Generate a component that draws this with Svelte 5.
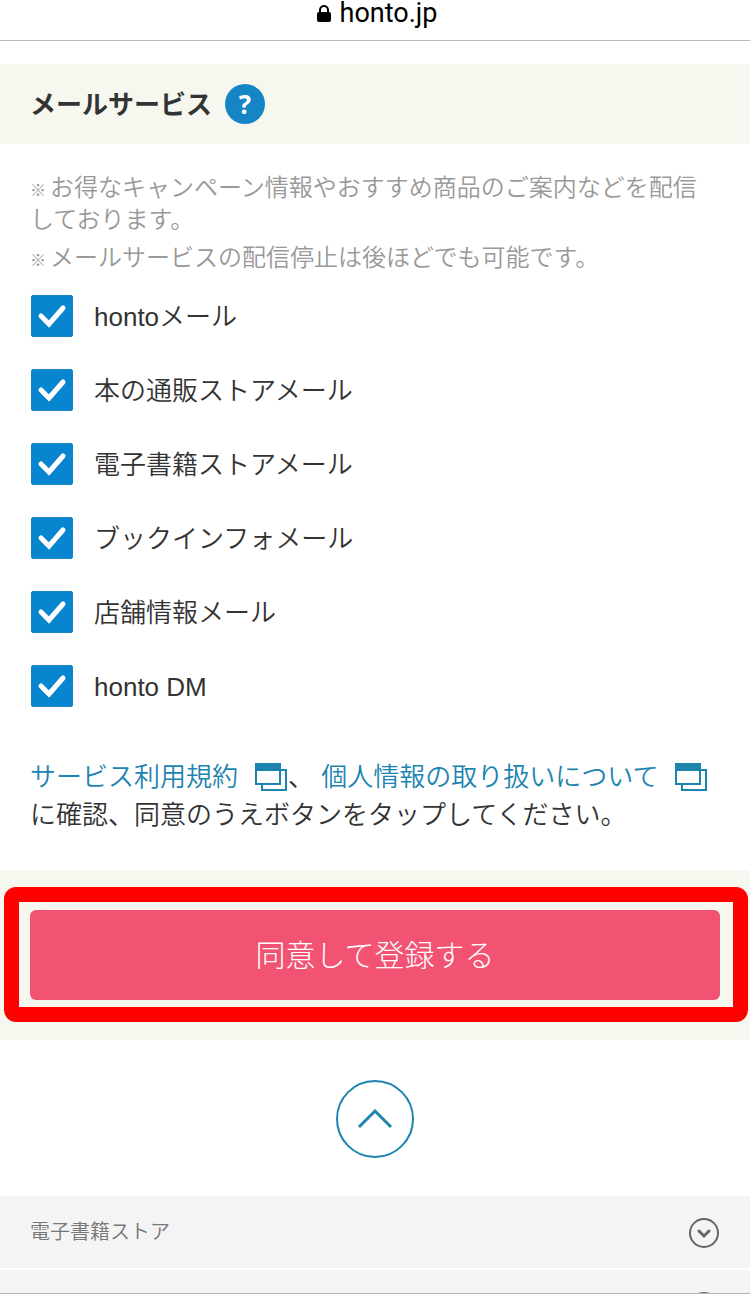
<script lang="ts">
	type MailService = { id: string; label: string; checked: boolean };

	let services = $state<MailService[]>([
		{ id: 'honto-mail', label: 'hontoメール', checked: true },
		{ id: 'store-mail', label: '本の通販ストアメール', checked: true },
		{ id: 'ebook-mail', label: '電子書籍ストアメール', checked: true },
		{ id: 'bookinfo-mail', label: 'ブックインフォメール', checked: true },
		{ id: 'shop-mail', label: '店舗情報メール', checked: true },
		{ id: 'honto-dm', label: 'honto DM', checked: true }
	]);

	const notes = [
		'お得なキャンペーン情報やおすすめ商品のご案内などを配信しております。',
		'メールサービスの配信停止は後ほどでも可能です。'
	];

	const footerItems = ['電子書籍ストア', ''];
</script>

{#snippet windowIcon()}
	<svg class="window-icon" viewBox="0 0 32 28" aria-hidden="true">
		<path d="M26 7h5v20H7v-5" fill="none" stroke="currentColor" stroke-width="2" />
		<rect x="1" y="1" width="24" height="20" fill="none" stroke="currentColor" stroke-width="2" />
		<path d="M0 0h26v8H0z" fill="currentColor" />
	</svg>
{/snippet}

<div class="page">
	<header class="address-bar">
		<svg class="lock" viewBox="0 0 14 17" aria-hidden="true">
			<rect x="0" y="7" width="14" height="10" rx="2" fill="#000" />
			<path d="M3 8V5a4 4 0 0 1 8 0v3" fill="none" stroke="#000" stroke-width="2" />
		</svg>
		<span>honto.jp</span>
	</header>

	<main>
		<div class="section-head">
			<h2>メールサービス</h2>
			<button class="help" type="button">?</button>
		</div>

		<section class="content">
			<div class="notes">
				{#each notes as note}
					<p><small>※</small>{note}</p>
				{/each}
			</div>

			<div class="services">
				{#each services as service}
					<div class="service">
						<span class="box">
							<input type="checkbox" id={service.id} bind:checked={service.checked} />
							<svg viewBox="0 0 42 42" aria-hidden="true">
								<path d="M10 21l8 8L32 13" fill="none" stroke="#fff" stroke-width="5" stroke-linecap="round" />
							</svg>
						</span>
						<label for={service.id}>{service.label}</label>
					</div>
				{/each}
			</div>

			<p class="agreement">
				<a href="#terms">サービス利用規約{@render windowIcon()}</a>、
				<a href="#privacy">個人情報の取り扱いについて{@render windowIcon()}</a>に確認、同意のうえボタンをタップしてください。
			</p>
		</section>

		<div class="submit-area">
			<div class="submit-wrap">
				<button class="submit" type="button">同意して登録する</button>
				<div class="highlight"></div>
			</div>
		</div>

		<div class="to-top">
			<a href="#top">
				<svg viewBox="0 0 78 78">
					<circle cx="39" cy="39" r="38" fill="#fff" stroke="currentColor" stroke-width="2" />
					<path d="M23 47l16-16 16 16" fill="none" stroke="currentColor" stroke-width="3" />
				</svg>
			</a>
		</div>
	</main>

	<footer>
		{#each footerItems as item}
			<button class="footer-row" type="button">
				<span>{item}</span>
				<svg viewBox="0 0 30 30" aria-hidden="true">
					<circle cx="15" cy="15" r="14" fill="none" stroke="#666" stroke-width="2" />
					<path d="M10 13l5 5 5-5" fill="none" stroke="#666" stroke-width="3" stroke-linecap="round" />
				</svg>
			</button>
		{/each}
	</footer>
</div>

<style>
	:global(body) {
		margin: 0;
		background: #fff;
	}

	.page {
		box-sizing: border-box;
		display: flex;
		flex-direction: column;
		height: 100vh;
		overflow: hidden;
		border-bottom: 1px solid #b4b4b4;
		font-family: 'Liberation Sans', 'Noto Sans CJK JP', sans-serif;
		font-size: 26px;
		font-weight: 350;
		color: #333;
	}

	.page > * {
		flex-shrink: 0;
	}

	button {
		margin: 0;
		padding: 0;
		border: 0;
		font: inherit;
		cursor: pointer;
	}

	svg {
		display: block;
	}

	a {
		color: #1d84b0;
		text-decoration: none;
	}

	.address-bar {
		display: flex;
		align-items: center;
		justify-content: center;
		gap: 9px;
		height: 26px;
		padding: 0 0 14px 4px;
		border-bottom: 1px solid #b9b9bc;
		font-family: Roboto, sans-serif;
		font-size: 27px;
		font-weight: 400;
		line-height: 26px;
		color: #000;
	}

	.lock {
		width: 14px;
		height: 17px;
	}

	.section-head {
		display: flex;
		align-items: center;
		gap: 13px;
		height: 80px;
		margin-top: 23px;
		padding: 0 30px;
		background: #f6f7ee;
	}

	h2 {
		margin: 0;
		padding-bottom: 4px;
		font-size: 26px;
		font-weight: 700;
	}

	.help {
		width: 40px;
		height: 40px;
		border-radius: 50%;
		background: #1585c6;
		color: #fff;
		font-family: 'Open Sans', sans-serif;
		font-weight: 700;
		line-height: 40px;
	}

	.content {
		padding: 28px 30px 36px;
	}

	.notes {
		display: flex;
		flex-direction: column;
		gap: 6px;
		margin-bottom: 21px;
		font-size: 24px;
		line-height: 32px;
		color: #999;
	}

	.notes p {
		margin: 0;
	}

	.notes small {
		margin-right: 4px;
		font-size: 16px;
		line-height: 16px;
	}

	.services {
		display: flex;
		flex-direction: column;
		gap: 32px;
		margin-bottom: 51px;
	}

	.service {
		display: flex;
		align-items: center;
		gap: 21px;
		height: 42px;
		line-height: 44px;
	}

	.box {
		display: grid;
		width: 42px;
		height: 42px;
		margin-left: 1px;
	}

	.box > * {
		grid-area: 1 / 1;
	}

	.box input {
		appearance: none;
		width: 42px;
		height: 42px;
		margin: 0;
		border: 1px solid #1585c6;
		border-radius: 2px;
		background: #fff;
	}

	.box input:checked {
		background: #0785cf;
	}

	.box svg {
		visibility: hidden;
		pointer-events: none;
	}

	.box input:checked + svg {
		visibility: visible;
	}

	.service label {
		padding-top: 2px;
	}

	.agreement {
		margin: 0;
		line-height: 38px;
	}

	.window-icon {
		display: inline-block;
		width: 32px;
		height: 28px;
		margin: 0 1px 0 17px;
		vertical-align: -5px;
	}

	.submit-area {
		padding: 40px 30px;
		background: #f6f7ee;
	}

	.submit-wrap {
		position: relative;
	}

	.submit {
		display: block;
		width: 100%;
		height: 90px;
		padding-bottom: 4px;
		border-radius: 6px;
		background: #f25373;
		font-size: 30px;
		font-weight: 300;
		color: #fff;
	}

	.highlight {
		position: absolute;
		inset: -23px -28px -22px -26px;
		border: 15px solid #f00;
		border-radius: 12px;
		pointer-events: none;
	}

	.to-top {
		display: flex;
		justify-content: center;
		padding: 40px 0 38px;
	}

	.to-top svg {
		width: 78px;
		height: 78px;
	}

	footer {
		display: flex;
		flex-direction: column;
		gap: 2px;
	}

	.footer-row {
		display: flex;
		align-items: center;
		justify-content: space-between;
		height: 72px;
		padding: 2px 31px 0 30px;
		background: #f4f4f4;
		font-size: 20px;
		color: #777;
	}

	.footer-row span {
		padding-bottom: 6px;
	}

	.footer-row svg {
		width: 30px;
		height: 30px;
	}
</style>
